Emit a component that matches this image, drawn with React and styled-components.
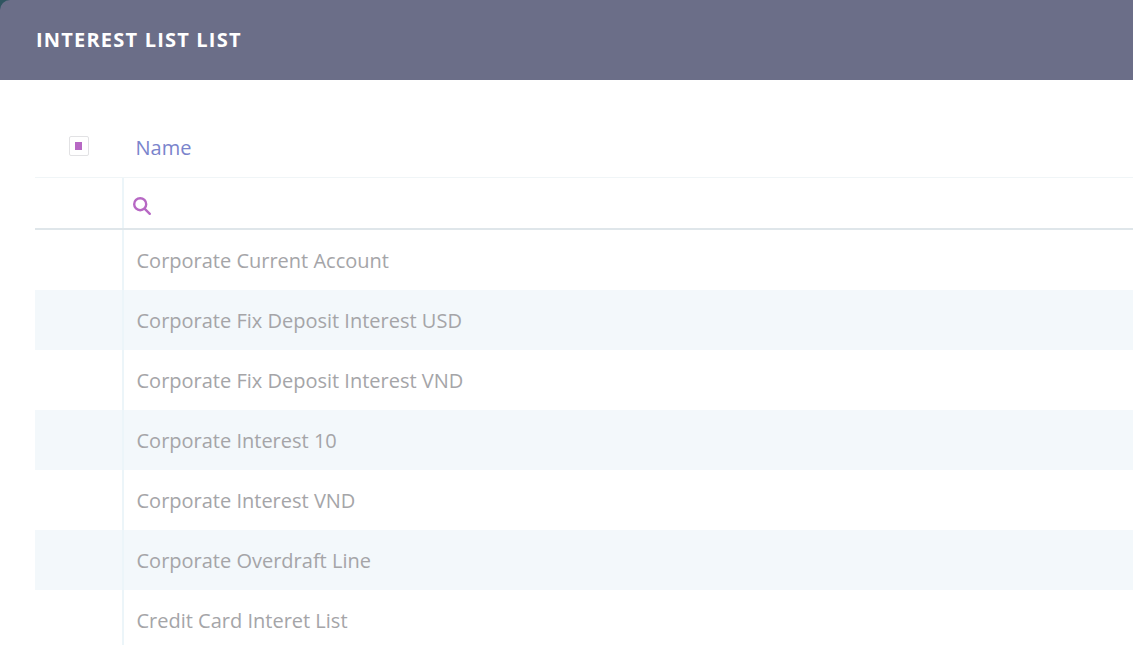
import React from "react";
import styled, { createGlobalStyle } from "styled-components";

const GlobalStyle = createGlobalStyle`
  html, body {
    margin: 0;
    padding: 0;
    background: #fff;
    overflow: hidden;
  }
  body {
    font-family: "Open Sans", sans-serif;
  }
`;

const Page = styled.div`
  position: relative;
  width: 1133px;
  height: 645px;
  overflow: hidden;
  background: #fff;
`;

const Header = styled.header`
  height: 80px;
  padding: 0 35px 2px 36px;
  box-sizing: border-box;
  display: flex;
  align-items: center;
  background: #6b6e88;
  border-top-left-radius: 10px;
  box-shadow: -14px -14px 0 14px #2f5560;
`;

const Title = styled.h1`
  margin: 0;
  font-size: 20px;
  font-weight: 700;
  letter-spacing: 1.2px;
  color: #fff;
  text-transform: uppercase;
`;

const Table = styled.div`
  margin: 40px 0 0 35px;
  display: flex;
  flex-direction: column;
`;

const Row = styled.div`
  display: grid;
  grid-template-columns: 87px 1fr;
  height: ${(p) => p.$height}px;
  background: ${(p) => (p.$striped ? "#f3f8fb" : "#fff")};
  border-bottom: ${(p) => p.$border || "none"};
  box-sizing: border-box;
`;

const CheckCell = styled.div`
  display: flex;
  justify-content: center;
  padding: 16px 0 0 0;
`;

const Checkbox = styled.span`
  width: 20px;
  height: 20px;
  box-sizing: border-box;
  display: flex;
  align-items: center;
  justify-content: center;
  border: 1px solid #e2e2e4;
  border-radius: 2px;
  background: #fff;
  &::after {
    content: "";
    width: 7px;
    height: 8px;
    background: #b768c4;
  }
`;

const HeadName = styled.div`
  display: flex;
  align-items: center;
  padding: 0 0 3px 13.5px;
  font-size: 20px;
  color: #7a84cc;
`;

const SearchCell = styled.div`
  display: flex;
  align-items: center;
  padding: 5px 0 0 8px;
  border-left: 2px solid #ecf5f9;
`;

const Cell = styled.div`
  display: flex;
  align-items: center;
  padding-left: 12.5px;
  font-size: 20px;
  color: #a5a5a8;
  border-left: 2px solid #ecf5f9;
`;

const SearchIcon = () => (
  <svg width="20" height="20" viewBox="0 0 20 20" fill="none" stroke="#b768c4" strokeWidth="2.4" strokeLinecap="round">
    <circle cx="8.2" cy="8.2" r="6" />
    <path d="M12.8 12.8l5 5" />
  </svg>
);

const rows = [
  "Corporate Current Account",
  "Corporate Fix Deposit Interest USD",
  "Corporate Fix Deposit Interest VND",
  "Corporate Interest 10",
  "Corporate Interest VND",
  "Corporate Overdraft Line",
  "Credit Card Interet List",
];

export default function App() {
  return (
    <Page>
      <GlobalStyle />
      <Header>
        <Title>Interest List List</Title>
      </Header>
      <Table>
        <Row $height={58} $border="1px solid #f0f5f7">
          <CheckCell>
            <Checkbox />
          </CheckCell>
          <HeadName>Name</HeadName>
        </Row>
        <Row $height={52} $border="2px solid #dfe6ea">
          <div />
          <SearchCell>
            <SearchIcon />
          </SearchCell>
        </Row>
        {rows.map((name, i) => (
          <Row key={name} $height={60} $striped={i % 2 === 1}>
            <div />
            <Cell>{name}</Cell>
          </Row>
        ))}
      </Table>
    </Page>
  );
}
